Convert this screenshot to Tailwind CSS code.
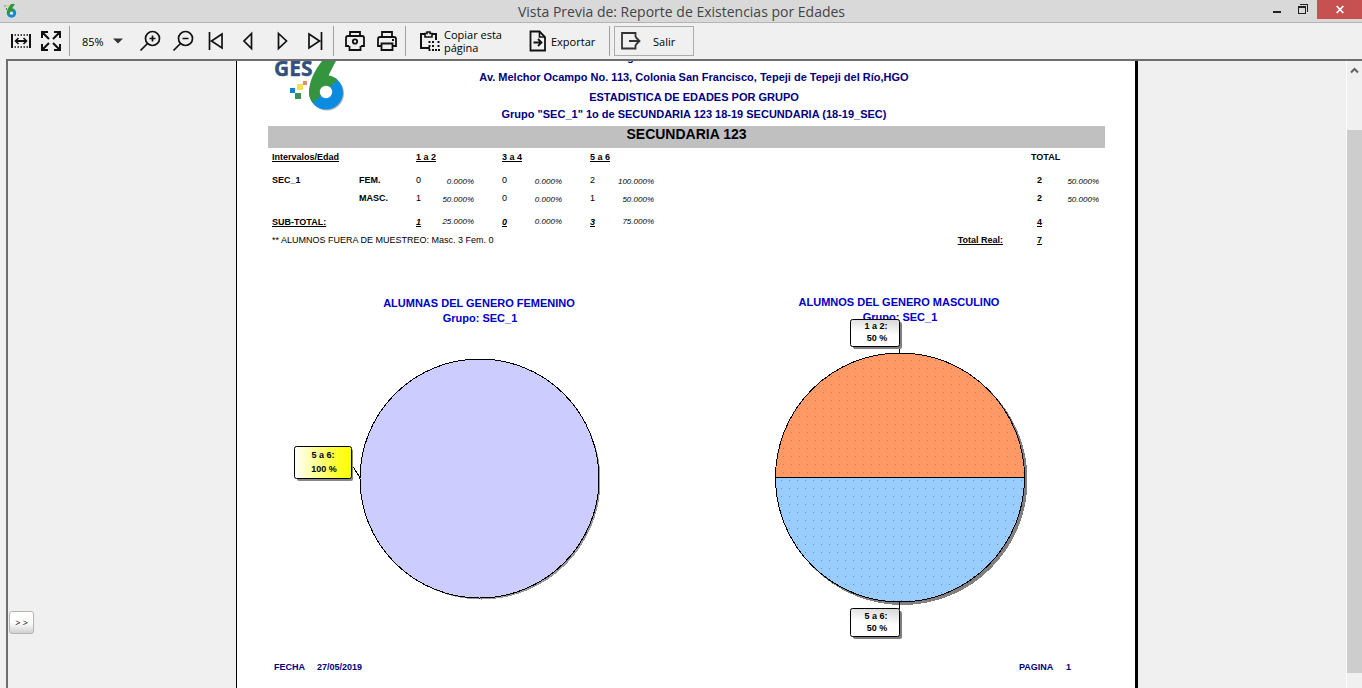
<!DOCTYPE html>
<html lang="es">
<head>
<meta charset="utf-8">
<title>Vista Previa de: Reporte de Existencias por Edades</title>
<script src="https://cdn.jsdelivr.net/npm/@tailwindcss/browser@4"></script>
</head>
<body class="flex h-screen flex-col overflow-hidden bg-[#f0f0f0] font-['Open_Sans',sans-serif] text-black">

<!-- Title bar -->
<header class="flex h-[23px] shrink-0 border-b border-[#b4b4b4] bg-[#d9d9d9]">
  <div class="w-[92px] shrink-0 pt-1 pl-1">
    <svg width="14" height="14" viewBox="0 0 14 14" aria-hidden="true">
      <circle cx="7.500" cy="9" r="4.700" fill="#1389d8"/>
      <path d="M11 0H7C4.500 3 2.800 6 2.800 9L3.500 11.500L11 5.800L8 4.400Z" fill="#35953f"/>
      <circle cx="7.500" cy="9.200" r="1.600" fill="#e8f0f0"/>
      <path d="M0 1h2v2H0z" fill="#8ac7a0"/><path d="M3 1h2v1H3z" fill="#e8c24a"/><path d="M2 4h1v2H2z" fill="#35953f"/>
    </svg>
  </div>
  <h1 class="flex-1 pl-1.5 text-center text-[14px] leading-[23px] text-[#444]">Vista Previa de: Reporte de Existencias por Edades</h1>
  <div class="flex h-[19px] shrink-0">
    <button class="flex w-[23px] items-center justify-center" aria-label="Minimizar"><svg width="8" height="19"><path d="M0 11h8v2H0z" fill="#222"/></svg></button>
    <button class="flex w-[29px] items-center justify-center" aria-label="Restaurar"><svg width="10" height="19" fill="none" stroke="#222" shape-rendering="crispEdges"><path d="M.5 7.500h7v6h-7zM0 6.500h8M2 4.500h7.500V12"/></svg></button>
    <button class="flex w-[45px] items-center justify-center bg-[#c75050]" aria-label="Cerrar"><svg width="8" height="19"><path d="M.7 6l6.600 7M7.300 6l-6.600 7" stroke="#fff" stroke-width="1.800"/></svg></button>
  </div>
</header>

<!-- Toolbar -->
<div role="toolbar" class="flex h-9 shrink-0 items-center pl-1.5 text-[11px] leading-[13px]">
  <button class="flex w-[30px] justify-center" aria-label="Ajustar al ancho">
    <svg width="20" height="20" viewBox="0 0 20 20" fill="none" stroke="#111" stroke-width="2"><path d="M1 3v14M19 3v14"/><path d="M5 10h10" /><path d="M7.500 7L4.500 10L7.500 13M12.500 7L15.500 10L12.500 13" stroke-width="1.600"/><path d="M3.500 4h14M3.500 16h14" stroke-width="1.500" stroke-dasharray="1.500 1.500"/></svg>
  </button>
  <button class="flex w-[30px] justify-center" aria-label="Pantalla completa">
    <svg width="22" height="22" viewBox="0 0 22 22" fill="none" stroke="#111" stroke-width="2"><path d="M2 8V2h6M2 2l7 7M14 2h6v6M20 2l-7 7M2 14v6h6M2 20l7-7M14 20h6v-6M20 20l-7-7"/></svg>
  </button>
  <div class="ml-[3px] h-[30px] w-px bg-[#a0a0a0]"></div>
  <label class="relative ml-3 flex w-[51px] items-center" aria-label="Zoom">
    <select class="w-full appearance-none bg-transparent">
      <option>85%</option><option>100%</option>
    </select>
    <svg class="pointer-events-none absolute right-2.5" width="10" height="6"><path d="M0 .5h10L5 5.500z" fill="#333"/></svg>
  </label>
  <button class="flex w-[33px] justify-center" aria-label="Acercar">
    <svg width="22" height="22" viewBox="0 0 22 22" fill="none" stroke="#111" stroke-width="1.700"><circle cx="13.500" cy="8.500" r="7"/><path d="M1.500 20.500L8.500 13.500M10.500 8.500h6M13.500 5.500v6"/></svg>
  </button>
  <button class="flex w-[33px] justify-center" aria-label="Alejar">
    <svg width="22" height="22" viewBox="0 0 22 22" fill="none" stroke="#111" stroke-width="1.700"><circle cx="13.500" cy="8.500" r="7"/><path d="M1.500 20.500L8.500 13.500M10.500 8.500h6"/></svg>
  </button>
  <button class="flex w-[33px] justify-center" aria-label="Primera página">
    <svg width="16" height="20" viewBox="0 0 16 20" fill="none" stroke="#111" stroke-width="1.700"><path d="M1.500 1v18M14 3L3.500 10L14 17z"/></svg>
  </button>
  <button class="flex w-[33px] justify-center" aria-label="Página anterior">
    <svg width="12" height="20" viewBox="0 0 12 20" fill="none" stroke="#111" stroke-width="1.700"><path d="M8.500 2.500L1 10L8.500 17.500z"/></svg>
  </button>
  <button class="flex w-[33px] justify-center" aria-label="Página siguiente">
    <svg width="12" height="20" viewBox="0 0 12 20" fill="none" stroke="#111" stroke-width="1.700"><path d="M2.500 2.500L10.500 10L2.500 17.500z"/></svg>
  </button>
  <button class="flex w-[33px] justify-center" aria-label="Última página">
    <svg width="16" height="20" viewBox="0 0 16 20" fill="none" stroke="#111" stroke-width="1.700"><path d="M14.500 1v18M2 3L12.500 10L2 17z"/></svg>
  </button>
  <div class="ml-0.5 mr-[5px] h-[30px] w-px bg-[#a0a0a0]"></div>
  <button class="flex w-8 justify-center" aria-label="Configurar impresión">
    <svg width="20" height="20" viewBox="0 0 20 20" fill="none" stroke="#111" stroke-width="1.800"><path d="M5 5V1h10v4M4 15H1V7q0-2 2-2h14q2 0 2 2v8h-3"/><path d="M4.500 15V19h11V15"/><circle cx="10" cy="10.500" r="2.200"/></svg>
  </button>
  <button class="flex w-8 justify-center" aria-label="Imprimir">
    <svg width="20" height="20" viewBox="0 0 20 20" fill="none" stroke="#111" stroke-width="1.800"><path d="M5 6V1h10v5M4 15H1V8q0-2 2-2h14q2 0 2 2v7h-3"/><path d="M4.500 12.500h11V19h-11zM15 9h2"/></svg>
  </button>
  <div class="ml-0.5 mr-3.5 h-[30px] w-px bg-[#a0a0a0]"></div>
  <button class="flex w-[104px] items-center gap-1 text-left">
    <svg class="shrink-0" width="20" height="22" viewBox="0 0 20 22" fill="none" stroke="#111" stroke-width="2"><path d="M5 4H1v14h9M12 4h4v6"/><path d="M5 7V3.500h2V2h3v1.500h2V7z" stroke-width="1.600"/><path d="M8.500 12h2M12 12h2M8.500 16h2M12 16h2M17.500 12h2M17.500 16h2M8.500 20h2M12 20h2M15 20h2M18 20h2"/></svg>
    <span>Copiar esta<br>página</span>
  </button>
  <button class="flex w-[85px] items-center gap-1 pl-[5px]">
    <svg class="shrink-0" width="18" height="22" viewBox="0 0 18 22" fill="none" stroke="#111" stroke-width="1.800"><path d="M1.500 1.500h9l5.500 5.500v13.500h-14.500z"/><path d="M10.500 1.500V7H16" stroke-width="1.600"/><path d="M4.500 12.500h8M9 9l3.500 3.500L9 16"/></svg>
    <span>Exportar</span>
  </button>
  <div class="mr-1 h-[30px] w-px bg-[#a0a0a0]"></div>
  <button class="flex h-[30px] w-20 items-center gap-3 border border-[#adadad] pl-1.5">
    <svg class="shrink-0" width="20" height="20" viewBox="0 0 20 20" fill="none" stroke="#333" stroke-width="1.800"><path d="M14.500 6V2H1v15.500h13.500V14"/><path d="M8 10h10.500M14.500 6l4 4l-4 4"/></svg>
    <span>Salir</span>
  </button>
</div>

<!-- Preview area -->
<main class="relative ml-1.5 flex min-h-0 flex-1 border-t-2 border-l-2 border-[#6e6e6e]">
  <div class="flex min-w-0 flex-1 justify-center overflow-hidden pl-5">
    <article class="flex w-[902px] shrink-0 flex-col border-r-[3px] border-l border-black bg-white font-['Liberation_Sans',sans-serif] text-[9px] leading-[18px] font-bold">

      <div class="relative h-[65px] shrink-0 overflow-hidden pl-4 text-center text-[11px] leading-[17px] text-[#000080]">
        <svg class="absolute top-0 left-[37px]" width="72" height="52" viewBox="274 61 72 52" role="img" aria-label="GES 6">
          <text x="274" y="76" font-family="Open Sans, sans-serif" font-weight="700" font-size="21" fill="#34507f" stroke="#34507f" stroke-width=".4">GES</text>
          <circle cx="327" cy="93.500" r="17" fill="#8d949a" opacity=".7"/>
          <circle cx="326" cy="92.500" r="17" fill="#0b8ce0"/>
          <path d="M336 61H322C315 70 309 81 309 92.500C309 96 310.500 99.500 313 103L337.500 80C335 77.500 332 76 328.500 75.500C331 71 333 66 336 61Z" fill="#35953f"/>
          <circle cx="326" cy="92" r="6.200" fill="#fff"/>
          <path d="M290 88h5v5h-5z" fill="#1380cc"/><path d="M297 84h6v6h-6z" fill="#f2df5a"/><path d="M303 81h4v4h-4z" fill="#e38f62"/><path d="M295 93h6v6h-6z" fill="#3b9150"/>
        </svg>
        <div class="flex h-0.5 items-end overflow-hidden pl-[374px]"><span class="leading-3" aria-hidden="true">g</span></div>
        <p class="mt-[6px]">Av. Melchor Ocampo No. 113, Colonia San Francisco, Tepeji de Tepeji del Río,HGO</p>
        <p class="mt-[3px]">ESTADISTICA DE EDADES POR GRUPO</p>
        <p>Grupo "SEC_1" 1o de SECUNDARIA 123 18-19 SECUNDARIA (18-19_SEC)</p>
      </div>

      <div class="mr-[30px] ml-[31px]">
        <h2 class="h-[22px] bg-[#c0c0c0] text-center text-[14px] leading-[17px]">SECUNDARIA 123</h2>
        <table class="w-full table-fixed text-left">
          <colgroup>
            <col class="w-[91px]"><col class="w-[57px]">
            <col class="w-5"><col class="w-[66px]">
            <col class="w-5"><col class="w-[68px]">
            <col class="w-5"><col class="w-[76px]">
            <col>
            <col class="w-[36px]"><col class="w-[38px]">
          </colgroup>
          <thead>
            <tr class="h-[18px] underline">
              <th colspan="2" class="pl-1">Intervalos/Edad</th>
              <th colspan="2">1 a 2</th><th colspan="2">3 a 4</th><th colspan="2">5 a 6</th>
              <th></th>
              <th colspan="2"><span class="inline-block">TOTAL</span></th>
            </tr>
          </thead>
          <tbody class="[&_i]:block [&_i]:text-[8px] [&_i]:font-normal">
            <tr class="h-[23px] align-bottom">
              <th class="pl-1">SEC_1</th><th>FEM.</th>
              <td class="font-normal">0</td><td class="pr-7 text-right leading-[14px]"><i>0.000%</i></td>
              <td class="font-normal">0</td><td class="pr-7 text-right leading-[14px]"><i>0.000%</i></td>
              <td class="font-normal">2</td><td class="pr-8 text-right leading-[14px]"><i>100.000%</i></td>
              <td></td>
              <td class="pl-1.5">2</td><td class="pr-1.5 text-right leading-[14px]"><i>50.000%</i></td>
            </tr>
            <tr class="h-[18px] align-bottom">
              <td></td><th>MASC.</th>
              <td class="font-normal">1</td><td class="pr-7 text-right leading-[14px]"><i>50.000%</i></td>
              <td class="font-normal">0</td><td class="pr-7 text-right leading-[14px]"><i>0.000%</i></td>
              <td class="font-normal">1</td><td class="pr-8 text-right leading-[14px]"><i>50.000%</i></td>
              <td></td>
              <td class="pl-1.5">2</td><td class="pr-1.5 text-right leading-[14px]"><i>50.000%</i></td>
            </tr>
            <tr class="h-6 align-bottom">
              <th colspan="2" class="pl-1 underline">SUB-TOTAL:</th>
              <td class="italic underline">1</td><td class="pr-7 text-right"><i>25.000%</i></td>
              <td class="italic underline">0</td><td class="pr-7 text-right"><i>0.000%</i></td>
              <td class="italic underline">3</td><td class="pr-8 text-right"><i>75.000%</i></td>
              <td></td>
              <td class="pl-1.5 underline">4</td><td></td>
            </tr>
            <tr class="h-[18px]">
              <td colspan="8" class="pl-1 font-normal">** ALUMNOS FUERA DE MUESTREO: Masc. 3 Fem. 0</td>
              <th class="pr-7 text-right underline">Total Real:</th>
              <td class="pl-1.5 underline">7</td><td></td>
            </tr>
          </tbody>
        </table>
      </div>

      <!-- Pie charts -->
      <div class="mt-[39px] ml-[31px] flex">
        <svg width="420" height="354" viewBox="268 288 420 354" role="img" aria-label="Alumnas del género femenino" font-weight="700" font-size="9" text-anchor="middle">
          <defs>
            <linearGradient id="yellow"><stop offset="0" stop-color="#fff"/><stop offset=".8" stop-color="#ffff20"/><stop offset="1" stop-color="#ff0"/></linearGradient>
          </defs>
          <g fill="#0000c8" font-size="11"><text x="479" y="307">ALUMNAS DEL GENERO FEMENINO</text><text x="480" y="322">Grupo: SEC_1</text></g>
          <g shape-rendering="crispEdges">
            <circle cx="481.500" cy="480.500" r="119" fill="#999"/>
            <circle cx="479.500" cy="478.500" r="119.500" fill="#ccf" stroke="#000"/>
            <path d="M353.500 467.500L360.500 478.500" stroke="#000"/>
          </g>
          <rect x="297" y="449" width="56" height="32" rx="2" fill="#888"/>
          <rect x="294.500" y="446.500" width="57" height="32" rx="2" fill="url(#yellow)" stroke="#000"/>
          <text x="323" y="458">5 a 6:</text><text x="324" y="472">100 %</text>
        </svg>
        <svg width="420" height="354" viewBox="688 288 420 354" role="img" aria-label="Alumnos del género masculino" font-weight="700" font-size="9" text-anchor="middle">
          <defs>
            <pattern id="orangeDots" width="8" height="8" patternUnits="userSpaceOnUse"><path d="M0 0h8v8H0z" fill="#ff9966"/><path d="M7 0h1v1H7z" fill="#c87850"/></pattern>
            <pattern id="blueDots" width="8" height="8" patternUnits="userSpaceOnUse"><path d="M0 0h8v8H0z" fill="#99ccff"/><path d="M5 0h1v1H5z" fill="#6690b8"/></pattern>
            <linearGradient id="silver" x1="1" y1="0" x2=".8" y2="1"><stop offset="0" stop-color="#d4d4d4"/><stop offset=".6" stop-color="#fff"/></linearGradient>
          </defs>
          <g fill="#0000c8" font-size="11"><text x="899" y="306">ALUMNOS DEL GENERO MASCULINO</text><text x="900" y="321">Grupo: SEC_1</text></g>
          <g shape-rendering="crispEdges">
            <circle cx="902.500" cy="480" r="125" fill="#808080"/>
            <path d="M775.500 477.500A124.500 124.500 0 0 1 1024.500 477.500Z" fill="url(#orangeDots)" stroke="#000"/>
            <path d="M775.500 477.500A124.500 124.500 0 0 0 1024.500 477.500Z" fill="url(#blueDots)" stroke="#000"/>
            <path d="M899.500 348v5M899.500 602v7" stroke="#000"/>
          </g>
          <rect x="853" y="322" width="49" height="27" rx="2" fill="#808080"/>
          <rect x="850.500" y="319.500" width="49" height="27" rx="2" fill="url(#silver)" stroke="#000"/>
          <text x="876" y="329">1 a 2:</text><text x="877" y="341">50 %</text>
          <rect x="853" y="611" width="49" height="28" rx="2" fill="#808080"/>
          <rect x="850.500" y="608.500" width="49" height="28" rx="2" fill="url(#silver)" stroke="#000"/>
          <text x="876" y="619">5 a 6:</text><text x="877" y="631">50 %</text>
        </svg>
      </div>

      <footer class="mt-4 flex pr-16 pl-[37px] text-[#000080]">
        <span class="w-[43px]">FECHA</span><span>27/05/2019</span>
        <span class="ml-auto w-[47px]">PAGINA</span><span>1</span>
      </footer>
    </article>
  </div>

  <!-- Vertical scrollbar -->
  <div class="flex w-4 shrink-0 flex-col border-l border-white">
    <button class="flex h-[69px] justify-center pt-1.5" aria-label="Subir"><svg width="9" height="7"><path d="M1 5.500L4.500 2L8 5.500" fill="none" stroke="#606060" stroke-width="2"/></svg></button>
    <div class="flex-1 bg-[#cdcdcd]"></div>
    <div class="h-[15px]"></div>
  </div>

  <button class="absolute bottom-[54px] left-px h-[23px] w-[25px] rounded-[3px] border border-[#b4b4b4] bg-linear-to-b from-white from-50% to-[#d0d0d0] text-[9px] leading-5" aria-label="Mostrar panel">&gt; &gt;</button>
</main>
</body>
</html>
